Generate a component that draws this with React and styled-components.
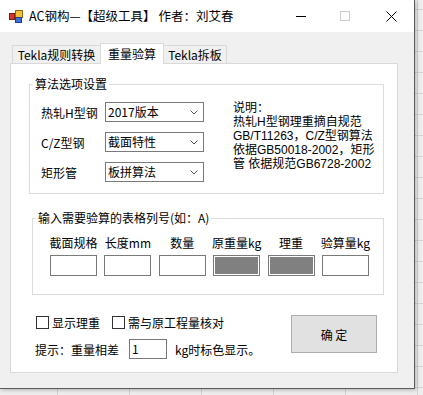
import React from "react"
import styled, { createGlobalStyle } from "styled-components"

const GlobalStyle = createGlobalStyle`
  html, body { margin: 0; padding: 0; }
  body {
    width: 423px;
    height: 395px;
    overflow: hidden;
    font-family: "Noto Sans CJK SC", "Noto Sans", sans-serif;
    font-size: 12px;
    color: #000;
    background-color: #eeeeee;
    background-image:
      linear-gradient(to right, #d2d2d2 1px, transparent 1px),
      linear-gradient(to bottom, #d2d2d2 1px, transparent 1px);
    background-size: 72px 21px;
    background-position: 57px 0, 0 9px;
  }
`

const tabs = ["Tekla规则转换", "重量验算", "Tekla拆板"]
const tabWidths = [89, 64, 64]

const options = [
	{ label: "热轧H型钢", value: "2017版本" },
	{ label: "C/Z型钢", value: "截面特性" },
	{ label: "矩形管", value: "板拼算法" },
]

const columns = [
	{ label: "截面规格" },
	{ label: "长度mm" },
	{ label: "数量" },
	{ label: "原重量kg", filled: true },
	{ label: "理重", filled: true },
	{ label: "验算量kg" },
]

const noteLines = [
	"说明：",
	"热轧H型钢理重摘自规范",
	"GB/T11263，C/Z型钢算法",
	"依据GB50018-2002，矩形",
	"管 依据规范GB6728-2002",
]

const AppIcon = () => (
	<svg width="14" height="13" viewBox="0 0 14 13">
		<rect x="6.5" y="0.5" width="7" height="7" fill="#f2c037" stroke="#8c6a14" />
		<rect x="0.5" y="3.5" width="5" height="6" fill="#d8342a" stroke="#7c1d18" />
		<rect x="6.5" y="7.5" width="6" height="5" fill="#3d6fd6" stroke="#1f3f85" />
	</svg>
)

const Chevron = () => (
	<svg width="8" height="5" viewBox="0 0 8 5">
		<polyline points="0.5,0.5 4,4 7.5,0.5" fill="none" stroke="#555" strokeWidth="1" />
	</svg>
)

const App = () => {
	return (
		<>
			<GlobalStyle />
			<Window>
				<TitleBar>
					<IconSlot><AppIcon /></IconSlot>
					<Title>AC钢构—【超级工具】 作者：刘艾春</Title>
					<Controls>
						<CtrlButton><MinGlyph /></CtrlButton>
						<CtrlButton><MaxGlyph /></CtrlButton>
						<CtrlButton>
							<svg width="11" height="11" viewBox="0 0 11 11">
								<path d="M0.5 0.5 L10.5 10.5 M10.5 0.5 L0.5 10.5" stroke="#000" strokeWidth="1" />
							</svg>
						</CtrlButton>
					</Controls>
				</TitleBar>
				<Body>
					<TabStrip>
						{tabs.map((t, i) => (
							<Tab key={t} $active={i === 1} style={{ width: tabWidths[i] }}>{t}</Tab>
						))}
					</TabStrip>
					<TabPage>
						<GroupBox $left={18} $top={20} $width={355} $height={110}>
							<Legend>算法选项设置</Legend>
							<OptionsRow>
								<OptionList>
									{options.map(o => (
										<OptionLine key={o.label}>
											<OptionLabel>{o.label}</OptionLabel>
											<Combo>
												<span>{o.value}</span>
												<Chevron />
											</Combo>
										</OptionLine>
									))}
								</OptionList>
								<Note>
									{noteLines.map(l => <NoteLine key={l}>{l}</NoteLine>)}
								</Note>
							</OptionsRow>
						</GroupBox>
						<GroupBox $left={21} $top={24} $width={352} $height={77}>
							<Legend>输入需要验算的表格列号(如：A)</Legend>
							<ColumnGrid>
								{columns.map(c => (
									<Column key={c.label}>
										<ColumnLabel>{c.label}</ColumnLabel>
										<CellInput $filled={c.filled} />
									</Column>
								))}
							</ColumnGrid>
						</GroupBox>
						<BottomArea>
							<LeftCol>
								<CheckRow>
									<Check><Box />显示理重</Check>
									<Check><Box />需与原工程量核对</Check>
								</CheckRow>
								<HintRow>
									<span>提示：重量相差</span>
									<SmallInput>1</SmallInput>
									<span>kg时标色显示。</span>
								</HintRow>
							</LeftCol>
							<OkButton>确 定</OkButton>
						</BottomArea>
					</TabPage>
				</Body>
			</Window>
		</>
	)
}

export default App

const Window = styled.div`
    width: 415px;
    height: 389px;
    box-sizing: border-box;
    display: flex;
    flex-direction: column;
    border-right: 1px solid #5c5c5c;
    border-bottom: 1px solid #5c5c5c;
    box-shadow: 1px 1px 4px rgba(0, 0, 0, 0.25);
    background: #f0f0f0;
`

const TitleBar = styled.div`
    height: 32px;
    flex-shrink: 0;
    display: flex;
    align-items: center;
    background: #fff;
`

const IconSlot = styled.div`
    display: flex;
    margin-left: 9px;
    margin-top: 1px;
`

const Title = styled.div`
    margin-left: 6px;
    font-size: 12.5px;
    line-height: 16px;
    color: #000;
    white-space: nowrap;
`

const Controls = styled.div`
    margin-left: auto;
    display: flex;
    height: 100%;
`

const CtrlButton = styled.div`
    width: 46px;
    height: 100%;
    display: flex;
    align-items: center;
    justify-content: center;
`

const MinGlyph = styled.div`
    width: 10px;
    height: 1px;
    background: #000;
    margin-left: 4px;
`

const MaxGlyph = styled.div`
    width: 10px;
    height: 10px;
    box-sizing: border-box;
    border: 1px solid #cccccc;
`

const Body = styled.div`
    flex: 1;
    display: flex;
    flex-direction: column;
    padding: 11px 0 0 10px;
`

const TabStrip = styled.div`
    display: flex;
    align-items: flex-end;
    height: 20px;
    margin-left: 2px;
    position: relative;
    z-index: 1;
`

const Tab = styled.div`
    box-sizing: border-box;
    height: ${p => (p.$active ? "21px" : "18px")};
    margin-bottom: ${p => (p.$active ? "-1px" : "0")};
    margin-left: -1px;
    &:first-child { margin-left: 0; }
    border: 1px solid #d9d9d9;
    border-bottom: none;
    background: ${p => (p.$active ? "#fff" : "#f0f0f0")};
    display: flex;
    align-items: center;
    justify-content: center;
    padding-bottom: ${p => (p.$active ? "2px" : "0")};
    font-size: 12px;
    white-space: nowrap;
`

const TabPage = styled.div`
    box-sizing: border-box;
    width: 388px;
    height: 310px;
    border: 1px solid #d9d9d9;
    background: #fff;
    display: flex;
    flex-direction: column;
`

const GroupBox = styled.div`
    position: relative;
    box-sizing: border-box;
    margin-left: ${p => p.$left}px;
    margin-top: ${p => p.$top}px;
    width: ${p => p.$width}px;
    height: ${p => p.$height}px;
    border: 1px solid #dcdcdc;
    flex-shrink: 0;
`

const Legend = styled.div`
    position: absolute;
    top: -8px;
    left: 3px;
    padding: 0 2px;
    background: #fff;
    line-height: 14px;
    white-space: nowrap;
`

const OptionsRow = styled.div`
    display: flex;
    padding: 17px 0 0 11px;
`

const OptionList = styled.div`
    display: flex;
    flex-direction: column;
    gap: 10px;
`

const OptionLine = styled.div`
    display: flex;
    align-items: center;
    height: 20px;
`

const OptionLabel = styled.div`
    width: 64px;
    white-space: nowrap;
`

const Combo = styled.div`
    box-sizing: border-box;
    width: 99px;
    height: 20px;
    border: 1px solid #7a7a7a;
    background: #fff;
    display: flex;
    align-items: center;
    justify-content: space-between;
    padding: 0 5px 0 2px;
    line-height: 16px;
    svg { margin-top: 1px; }
`

const Note = styled.div`
    margin-left: 29px;
    margin-top: -1px;
    display: flex;
    flex-direction: column;
    font-family: "Liberation Sans", "Noto Sans CJK SC", sans-serif;
`

const NoteLine = styled.div`
    height: 14px;
    line-height: 14px;
    white-space: nowrap;
`

const ColumnGrid = styled.div`
    display: grid;
    grid-template-columns: repeat(6, 47px);
    column-gap: 7.4px;
    padding: 16px 0 0 17px;
`

const Column = styled.div`
    display: flex;
    flex-direction: column;
    align-items: center;
    gap: 4px;
`

const ColumnLabel = styled.div`
    line-height: 16px;
    white-space: nowrap;
`

const CellInput = styled.div`
    box-sizing: border-box;
    width: 47px;
    height: 21px;
    border: 1px solid #7a7a7a;
    background: ${p => (p.$filled ? "#808080" : "#fff")};
    box-shadow: ${p => (p.$filled ? "inset 0 0 0 1px #fff" : "none")};
`

const BottomArea = styled.div`
    display: flex;
    justify-content: space-between;
    margin-top: 20px;
    padding: 0 20px 0 24px;
`

const LeftCol = styled.div`
    display: flex;
    flex-direction: column;
    gap: 9px;
`

const CheckRow = styled.div`
    display: flex;
    align-items: center;
    height: 15px;
    gap: 12px;
    padding-left: 1px;
`

const Check = styled.label`
    display: flex;
    align-items: center;
    gap: 3px;
    white-space: nowrap;
`

const Box = styled.span`
    box-sizing: border-box;
    width: 13px;
    height: 13px;
    border: 1px solid #333;
    background: #fff;
`

const HintRow = styled.div`
    display: flex;
    align-items: center;
    height: 20px;
    white-space: nowrap;
    span:last-child { margin-left: 8px; }
`

const SmallInput = styled.div`
    box-sizing: border-box;
    width: 38px;
    height: 20px;
    margin-left: 10px;
    border: 1px solid #7a7a7a;
    background: #fff;
    padding-left: 2px;
    line-height: 18px;
`

const OkButton = styled.div`
    box-sizing: border-box;
    width: 86px;
    height: 38px;
    border: 1px solid #adadad;
    background: #e1e1e1;
    display: flex;
    align-items: center;
    justify-content: center;
    white-space: pre;
`
